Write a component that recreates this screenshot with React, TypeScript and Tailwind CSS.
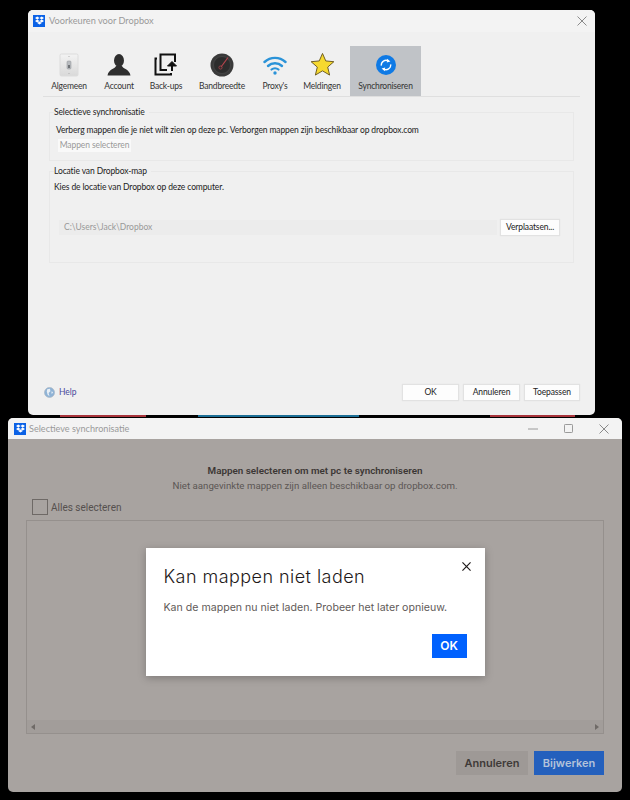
import React from 'react';

const DropboxBadge = () => (
  <div className="flex h-3 w-3 items-center justify-center bg-[#0b62e6]">
    <svg viewBox="0 0 24 24" className="h-[9px] w-[9px]" fill="#fff">
      <path d="M6 1 12 5 6 9 0 5Z M18 1 24 5 18 9 12 5Z M6 9 12 13 6 17 0 13Z M18 9 24 13 18 17 12 13Z M6 18.5 12 14.5 18 18.5 12 22.5Z" />
    </svg>
  </div>
);

const CloseIcon = ({ color = '#8a8a8a', size = 10, width = 1 }: { color?: string; size?: number; width?: number }) => (
  <svg viewBox="0 0 10 10" width={size} height={size} fill="none" stroke={color} strokeWidth={width}>
    <path d="M0.5 0.5 9.5 9.5M9.5 0.5 0.5 9.5" />
  </svg>
);

const SwitchIcon = () => (
  <svg viewBox="0 0 24 24" width="24" height="24">
    <defs>
      <linearGradient id="plate" x1="0" y1="0" x2="0" y2="1">
        <stop offset="0" stopColor="#f3f3f3" />
        <stop offset="1" stopColor="#d9d9d9" />
      </linearGradient>
    </defs>
    <rect x="3" y="1" width="18" height="22" rx="1.5" fill="url(#plate)" stroke="#dcdcdc" />
    <rect x="10" y="8" width="4" height="8" rx="1" fill="#b9bcc0" stroke="#8f9297" strokeWidth="0.5" />
    <rect x="11" y="12" width="2" height="3" fill="#6f7377" />
    <circle cx="12" cy="3.5" r="0.6" fill="#aaa" />
    <circle cx="12" cy="20.5" r="0.6" fill="#aaa" />
  </svg>
);

const UserIcon = () => (
  <svg viewBox="0 0 24 24" width="24" height="24" fill="#2e2e2e">
    <ellipse cx="12" cy="7.5" rx="5" ry="6.5" />
    <path d="M9 13 C8.5 15.5 1.5 16 0.5 22.5 H23.5 C22.5 16 15.5 15.5 15 13Z" />
  </svg>
);

const BackupIcon = () => (
  <svg viewBox="0 0 24 24" width="24" height="24" fill="none" stroke="#111" strokeWidth="2">
    <path d="M21 9V1.5H6.5V17H13" />
    <path d="M3 5.5H1.5V21.5H17V20" />
    <path d="M18 18V10" strokeWidth="2" />
    <path d="M13.5 13 18 8.5 22.5 13Z" fill="#111" strokeWidth="1" />
  </svg>
);

const GaugeIcon = () => (
  <svg viewBox="0 0 24 24" width="24" height="24">
    <circle cx="12" cy="12" r="11.5" fill="#3a3a3a" />
    <circle cx="12" cy="12" r="8.5" fill="#2c2c2c" stroke="#555" strokeWidth="0.5" />
    <path d="M18 4.5 11 14" stroke="#b5444c" strokeWidth="1.2" />
    <circle cx="10.5" cy="14.5" r="1.6" fill="none" stroke="#a8434a" strokeWidth="0.8" />
  </svg>
);

const WifiIcon = () => (
  <svg viewBox="0 0 24 20" width="24" height="20" fill="none" stroke="#2b93d8" strokeLinecap="round">
    <path d="M1.5 7C7.5 1.5 16.5 1.5 22.5 7" strokeWidth="2.4" />
    <path d="M5 11C9 7.3 15 7.3 19 11" strokeWidth="2.4" />
    <path d="M8.5 14.5C10.5 12.8 13.5 12.8 15.5 14.5" strokeWidth="2.2" />
    <circle cx="12" cy="18" r="1.7" fill="#2b93d8" stroke="none" />
  </svg>
);

const StarIcon = () => (
  <svg viewBox="0 0 26 26" width="25" height="25">
    <path d="M13 1.5 16.4 9.3 24.8 10.1 18.4 15.7 20.4 24 13 19.6 5.6 24 7.6 15.7 1.2 10.1 9.6 9.3Z" fill="#f6d92f" stroke="#6b5a1e" strokeWidth="1" strokeLinejoin="round" />
  </svg>
);

const SyncIcon = () => (
  <svg viewBox="0 0 20 20" width="20" height="20">
    <circle cx="10" cy="10" r="10" fill="#0f7ae5" />
    <path d="M5.3 10.6A4.8 4.8 0 0 1 12.4 5.9" fill="none" stroke="#fff" strokeWidth="1.3" />
    <path d="M14.7 9.4A4.8 4.8 0 0 1 7.6 14.1" fill="none" stroke="#fff" strokeWidth="1.3" />
    <path d="M11.2 3.7 14.4 6.4 10.8 7.6Z M8.8 16.3 5.6 13.6 9.2 12.4Z" fill="#fff" />
  </svg>
);

const HelpIcon = () => (
  <svg viewBox="0 0 12 12" width="11" height="11">
    <circle cx="6" cy="6" r="5.5" fill="#8fb3d6" stroke="#a9b6c4" strokeWidth="0.7" />
    <path d="M3.5 2.5 6.5 2 7 4.5 5 6.5 6 10 4 8.5 3 5Z M8 5 10 5.5 8.5 8Z" fill="#e9eff5" />
  </svg>
);

const tabs = [
  { label: 'Algemeen', icon: <SwitchIcon />, width: 'w-[50px]' },
  { label: 'Account', icon: <UserIcon />, width: 'w-[50px]' },
  { label: 'Back-ups', icon: <BackupIcon />, width: 'w-[44px]' },
  { label: 'Bandbreedte', icon: <GaugeIcon />, width: 'w-[68px]' },
  { label: "Proxy's", icon: <WifiIcon />, width: 'w-[38px]' },
  { label: 'Meldingen', icon: <StarIcon />, width: 'w-[56px]' },
  { label: 'Synchroniseren', icon: <SyncIcon />, width: 'w-[71px]', active: true },
];

const PrefButton = ({ children, className = '' }: { children: React.ReactNode; className?: string }) => (
  <div className={`flex h-[15px] items-center justify-center whitespace-nowrap bg-[#fdfdfd] text-[8.5px] tracking-[-0.12px] text-[#222] shadow-[0_0_1px_1px_#e2e2e2] ${className}`}>
    {children}
  </div>
);

const GroupBox = ({ title, className, children }: { title: string; className: string; children: React.ReactNode }) => (
  <div className={`border border-[#e8e8e8] ${className}`}>
    <div className="ml-1 -mt-[7px] w-fit bg-[#f0f0f0] pr-1 text-[8.5px] leading-[13px] tracking-[-0.12px] text-[#222]">{title}</div>
    {children}
  </div>
);

const PreferencesWindow = () => (
  <div className="ml-[28px] flex h-[405px] w-[567px] flex-col rounded-[5px] bg-[#f0f0f0] font-['Lato',sans-serif]">
    <div className="flex h-[22px] items-center justify-between rounded-t-[5px] bg-[#f3f3f3] pl-[5px] pr-[8px]">
      <div className="flex items-center gap-[4px]">
        <DropboxBadge />
        <span className="text-[9.2px] text-[#9a9a9a]">Voorkeuren voor Dropbox</span>
      </div>
      <CloseIcon />
    </div>

    <div className="mt-[14px] ml-[15px] flex h-[51px] w-[537px] border-b border-[#dfdfdf] pl-[1px]">
      {tabs.map((tab) => (
        <div
          key={tab.label}
          className={`flex h-[50px] flex-col items-center ${tab.width} ${tab.active ? 'bg-[#c0c3c7]' : ''}`}
        >
          <div className="flex h-[34px] items-center justify-center pt-[3px]">{tab.icon}</div>
          <span className="whitespace-nowrap text-[8.5px] leading-[12px] tracking-[-0.2px] text-[#333]">{tab.label}</span>
        </div>
      ))}
    </div>

    <GroupBox title="Selectieve synchronisatie" className="mx-[21px] mt-[15px] h-[49px] w-[525px]">
      <div className="ml-[6px] mt-[5px] text-[8.5px] leading-[13px] tracking-[-0.12px] text-[#222]">
        Verberg mappen die je niet wilt zien op deze pc. Verborgen mappen zijn beschikbaar op dropbox.com
      </div>
      <div className="ml-[8px] mt-[2px] flex h-[13px] w-[73px] items-center justify-center whitespace-nowrap bg-[#f9f9f9] text-[8.5px] tracking-[-0.1px] text-[#9a9a9a]">
        Mappen selecteren
      </div>
    </GroupBox>

    <GroupBox title="Locatie van Dropbox-map" className="mx-[21px] mt-[10px] h-[92px] w-[525px]">
      <div className="ml-[4px] mt-[3px] text-[8.5px] leading-[13px] tracking-[-0.12px] text-[#222]">Kies de locatie van Dropbox op deze computer.</div>
      <div className="ml-[9px] mt-[26px] flex items-center gap-[4px]">
        <div className="flex h-[15px] w-[438px] items-center bg-[#ececec] pl-[5px] text-[8.5px] text-[#999]">C:\Users\Jack\Dropbox</div>
        <PrefButton className="w-[58px]">Verplaatsen...</PrefButton>
      </div>
    </GroupBox>

    <div className="mt-auto mb-[15px] flex items-center pl-[16px] pr-[16px]">
      <HelpIcon />
      <span className="ml-[4px] text-[8.5px] text-[#4a4a9c]">Help</span>
      <PrefButton className="ml-auto w-[55px]">OK</PrefButton>
      <PrefButton className="ml-[6px] w-[55px]">Annuleren</PrefButton>
      <PrefButton className="ml-[6px] w-[54px]">Toepassen</PrefButton>
    </div>
  </div>
);

// coloured slivers of the wallpaper that show between the two windows
const WallpaperStrip = () => (
  <div className="flex h-[3px] w-full items-start">
    <div className="ml-[60px] h-[2px] w-[86px] bg-[#a8343b]" />
    <div className="ml-[52px] h-[2px] w-[161px] bg-[#1c6f96]" />
    <div className="ml-[131px] h-[2px] w-[85px] bg-[#a8343b]" />
  </div>
);

const SelectiveSyncWindow = () => (
  <div className="relative ml-[8px] flex h-[374px] w-[614px] flex-col overflow-hidden rounded-[5px] bg-[#a8a3a0] font-['Inter',sans-serif]">
    <div className="flex h-[21px] shrink-0 items-center bg-[#f3f3f3] pl-[6px] pr-[13px] font-['Lato',sans-serif]">
      <DropboxBadge />
      <span className="ml-[3px] text-[9.1px] text-[#9a9a9a]">Selectieve synchronisatie</span>
      <svg viewBox="0 0 10 10" width="10" height="10" className="ml-auto" fill="none" stroke="#9a9a9a">
        <path d="M0 5H10" />
      </svg>
      <svg viewBox="0 0 10 10" width="9" height="9" className="ml-[26px]" fill="none" stroke="#8a8a8a">
        <rect x="0.5" y="0.5" width="9" height="9" rx="1" />
      </svg>
      <div className="ml-[26px]">
        <CloseIcon />
      </div>
    </div>

    <div className="mt-[25px] text-center font-['Roboto',sans-serif] text-[9.85px] font-semibold leading-[14px] text-[#3c3735]">
      Mappen selecteren om met pc te synchroniseren
    </div>
    <div className="mt-[1px] text-center font-['Roboto',sans-serif] text-[9.7px] leading-[14px] text-[#5b5654]">
      Niet aangevinkte mappen zijn alleen beschikbaar op dropbox.com.
    </div>

    <div className="ml-[24px] mt-[6px] flex items-center gap-[3px]">
      <div className="h-[16px] w-[16px] border border-[#6e6966]" />
      <span className="font-['Roboto',sans-serif] text-[10px] text-[#55504e]">Alles selecteren</span>
    </div>

    <div className="mx-[18px] mt-[5px] flex h-[214px] w-[578px] flex-col justify-end border border-[#95908d]">
      <div className="flex h-[13px] items-center justify-between bg-[#a29d9a] px-[4px] text-[#6f6a67]">
        <svg viewBox="0 0 4 6" width="4" height="6" fill="currentColor"><path d="M4 0V6L0 3Z" /></svg>
        <svg viewBox="0 0 4 6" width="4" height="6" fill="currentColor"><path d="M0 0V6L4 3Z" /></svg>
      </div>
    </div>

    <div className="mr-[18px] mt-[17px] flex justify-end gap-[6px] text-[11px] font-semibold">
      <div className="flex h-[24px] w-[72px] items-center justify-center bg-[#9e9996] text-[#3f3a38]">Annuleren</div>
      <div className="flex h-[24px] w-[70px] items-center justify-center bg-[#2460bd] text-[#b4c3da]">Bijwerken</div>
    </div>

    {/* error dialog over the dimmed window */}
    <div className="absolute inset-x-0 top-[21px] bottom-0 flex items-center justify-center pb-[7px]">
      <div className="flex h-[128px] w-[339px] flex-col bg-white pl-[18px] pr-[18px] shadow-[0_2px_8px_rgba(0,0,0,0.25)]">
        <div className="flex justify-between pt-[18px]">
          <span className="text-[18px] font-light leading-[22px] tracking-[0.45px] text-[#1e1919]">Kan mappen niet laden</span>
          <div className="-mr-[4px] -mt-[4px]">
            <CloseIcon color="#1e1919" size={9} width={1.3} />
          </div>
        </div>
        <div className="mt-[13px] text-[10.6px] leading-[14px] text-[#5f5a58]">
          Kan de mappen nu niet laden. Probeer het later opnieuw.
        </div>
        <div className="ml-auto mt-[19px] flex h-[24px] w-[35px] items-center justify-center bg-[#0061fe] text-[12px] font-semibold text-white">
          OK
        </div>
      </div>
    </div>
  </div>
);

export default function App() {
  return (
    <div className="h-[800px] w-[630px] overflow-hidden bg-black pt-[10px]">
      <PreferencesWindow />
      <WallpaperStrip />
      <SelectiveSyncWindow />
    </div>
  );
}
